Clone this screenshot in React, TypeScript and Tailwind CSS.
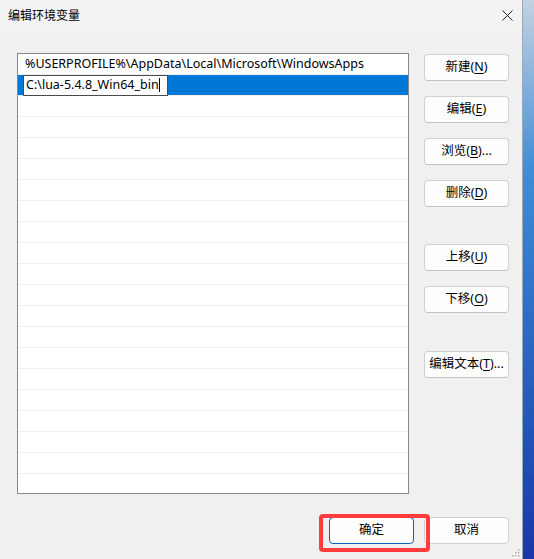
import React from 'react'

const font = { fontFamily: '"Noto Sans", "Noto Sans CJK SC", sans-serif' }

function Btn({ label, k, tail = '', className = '' }: { label: string; k: string; tail?: string; className?: string }) {
  return (
    <div
      className={`h-[27px] w-[85px] flex items-center justify-center rounded-[4px] border border-[#d0d0d0] border-b-[#c2c2c2] bg-[#fdfdfd] text-[12.5px] text-black ${className}`}
    >
      <span>
        {label}(<span className="underline underline-offset-2">{k}</span>){tail}
      </span>
    </div>
  )
}

export default function App() {
  const rows = Array.from({ length: 21 })
  return (
    <div className="flex w-[534px] h-[559px] overflow-hidden bg-[#f0f0f0]" style={font}>
      {/* Dialog window */}
      <div className="relative w-[523px] h-full flex flex-col bg-[#f0f0f0] border-r border-[#9aa9b8]">
        {/* Title bar */}
        <div className="h-[31px] flex items-center justify-between pl-[8px] pr-[9px] bg-[#f3f3f3]">
          <span className="text-[12px] text-black leading-none">编辑环境变量</span>
          <svg width="11" height="11" viewBox="0 0 11 11">
            <path d="M0.5 0.5L10.5 10.5M10.5 0.5L0.5 10.5" stroke="#222" strokeWidth="1" />
          </svg>
        </div>

        {/* Body */}
        <div className="flex pl-[17px] pr-[13px] pt-[22px]">
          {/* List */}
          <div className="w-[393px] h-[441px] border border-[#828790] bg-white overflow-hidden flex flex-col">
            {rows.map((_, i) => (
              <div key={i} className="h-[21px] shrink-0 border-b border-[#efefef] flex items-center text-[12.5px] text-black">
                {i === 0 && <span className="pl-[7px]">%USERPROFILE%\AppData\Local\Microsoft\WindowsApps</span>}
                {i === 1 && (
                  <div className="w-full h-full bg-[#0078d7] flex items-center pl-[5px]">
                    <div className="h-[21px] w-[145px] border border-[#4a4a4a] bg-white flex items-center pl-[2px]">
                      <span>C:\lua-5.4.8_Win64_bin</span>
                      <span className="w-px h-[14px] bg-black" />
                    </div>
                  </div>
                )}
              </div>
            ))}
          </div>

          {/* Side buttons */}
          <div className="ml-[15px] flex flex-col pt-[1px]">
            <Btn label="新建" k="N" />
            <Btn label="编辑" k="E" className="mt-[15px]" />
            <Btn label="浏览" k="B" tail="..." className="mt-[15px]" />
            <Btn label="删除" k="D" className="mt-[15px]" />
            <Btn label="上移" k="U" className="mt-[37px]" />
            <Btn label="下移" k="O" className="mt-[15px]" />
            <Btn label="编辑文本" k="T" tail="..." className="mt-[38px]" />
          </div>
        </div>

        {/* Footer buttons */}
        <div className="flex justify-end gap-[10px] pr-[13px] mt-[23px]">
          <div className="h-[27px] w-[85px] flex items-center justify-center rounded-[4px] border border-[#0067c0] bg-[#fdfdfd] text-[12.5px] text-black">
            确定
          </div>
          <div className="h-[27px] w-[85px] flex items-center justify-center rounded-[4px] border border-[#d0d0d0] bg-[#fdfdfd] text-[12.5px] text-black">
            取消
          </div>
        </div>

        {/* Red annotation box */}
        <div className="absolute left-[319px] top-[514px] w-[111px] h-[38px] border-[4px] border-[#ff3b3b] rounded-[4px]" />

        {/* Resize grip */}
        <svg className="absolute right-[2px] bottom-[2px]" width="8" height="8" viewBox="0 0 8 8">
          <rect x="6" y="0" width="1.5" height="1.5" fill="#b0b0b0" />
          <rect x="3" y="3" width="1.5" height="1.5" fill="#b0b0b0" />
          <rect x="6" y="3" width="1.5" height="1.5" fill="#b0b0b0" />
          <rect x="0" y="6" width="1.5" height="1.5" fill="#b0b0b0" />
          <rect x="3" y="6" width="1.5" height="1.5" fill="#b0b0b0" />
          <rect x="6" y="6" width="1.5" height="1.5" fill="#b0b0b0" />
        </svg>
      </div>

      {/* Desktop strip */}
      <div className="flex-1 h-full bg-gradient-to-b from-[#c3d2e0] via-[#3f8ed6] via-30% to-[#1b36a8]" />
    </div>
  )
}
